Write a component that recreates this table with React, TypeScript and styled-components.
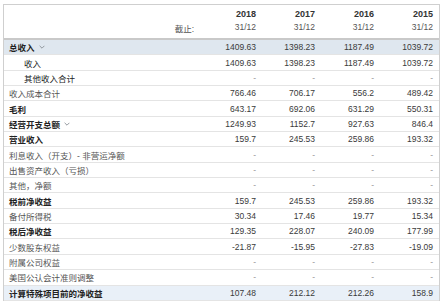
import styled, { createGlobalStyle } from "styled-components";

const GlobalStyle = createGlobalStyle`
  body {
    margin: 0;
    background: #fff;
    font-family: "Liberation Sans", Arial, "Noto Sans CJK SC", sans-serif;
  }
`;

type Kind = "total" | "bold" | "sub" | "plain" | "final";

type Line = {
  label: string;
  kind: Kind;
  values: string[];
  toggle?: boolean;
};

const years = [
  { year: "2018", date: "31/12" },
  { year: "2017", date: "31/12" },
  { year: "2016", date: "31/12" },
  { year: "2015", date: "31/12" },
];

const lines: Line[] = [
  { label: "总收入", kind: "total", toggle: true, values: ["1409.63", "1398.23", "1187.49", "1039.72"] },
  { label: "收入", kind: "sub", values: ["1409.63", "1398.23", "1187.49", "1039.72"] },
  { label: "其他收入合计", kind: "sub", values: ["-", "-", "-", "-"] },
  { label: "收入成本合计", kind: "plain", values: ["766.46", "706.17", "556.2", "489.42"] },
  { label: "毛利", kind: "bold", values: ["643.17", "692.06", "631.29", "550.31"] },
  { label: "经营开支总额", kind: "bold", toggle: true, values: ["1249.93", "1152.7", "927.63", "846.4"] },
  { label: "营业收入", kind: "bold", values: ["159.7", "245.53", "259.86", "193.32"] },
  { label: "利息收入（开支）- 非营运净额", kind: "plain", values: ["-", "-", "-", "-"] },
  { label: "出售资产收入（亏损）", kind: "plain", values: ["-", "-", "-", "-"] },
  { label: "其他，净额", kind: "plain", values: ["-", "-", "-", "-"] },
  { label: "税前净收益", kind: "bold", values: ["159.7", "245.53", "259.86", "193.32"] },
  { label: "备付所得税", kind: "plain", values: ["30.34", "17.46", "19.77", "15.34"] },
  { label: "税后净收益", kind: "bold", values: ["129.35", "228.07", "240.09", "177.99"] },
  { label: "少数股东权益", kind: "plain", values: ["-21.87", "-15.95", "-27.83", "-19.09"] },
  { label: "附属公司权益", kind: "plain", values: ["-", "-", "-", "-"] },
  { label: "美国公认会计准则调整", kind: "plain", values: ["-", "-", "-", "-"] },
  { label: "计算特殊项目前的净收益", kind: "final", values: ["107.48", "212.12", "212.26", "158.9"] },
];

const Chevron = () => (
  <svg width="6" height="4" viewBox="0 0 6 4">
    <path d="M0.6 0.8 L3 3.2 L5.4 0.8" fill="none" stroke="#8a8f96" strokeWidth="0.9" />
  </svg>
);

const App = () => (
  <>
    <GlobalStyle />
    <Page>
      <Table>
        <Header>
          <HeadLabel>截止:</HeadLabel>
          {years.map((y) => (
            <HeadCell key={y.year}>
              <Year>{y.year}</Year>
              <DateText>{y.date}</DateText>
            </HeadCell>
          ))}
        </Header>
        {lines.map((line) => (
          <Row key={line.label} $kind={line.kind}>
            <Label $kind={line.kind}>
              {line.label}
              {line.toggle && <Chevron />}
            </Label>
            {line.values.map((v, i) => (
              <Value key={i} $empty={v === "-"}>
                {v}
              </Value>
            ))}
          </Row>
        ))}
      </Table>
    </Page>
  </>
);

export default App;

const Page = styled.div`
  padding: 4px 7px 0 3px;
`;

const Table = styled.div`
  border: 1px solid #cfcfcf;
  border-bottom: none;
  font-size: 8.5px;
  color: #3a3a3a;
`;

const Header = styled.div`
  display: grid;
  grid-template-columns: 1fr repeat(4, 59px);
  height: 33px;
  border-bottom: 2px solid #c9c9c9;
`;

const HeadLabel = styled.div`
  display: flex;
  align-items: flex-end;
  justify-content: flex-end;
  padding: 0 9px 4px 0;
  color: #555;
`;

const HeadCell = styled.div`
  display: flex;
  flex-direction: column;
  align-items: flex-end;
  justify-content: flex-end;
  padding: 0 6px 4px 0;
  line-height: 13px;
`;

const Year = styled.span`
  font-weight: 700;
  font-size: 9px;
  color: #333;
`;

const DateText = styled.span`
  color: #555;
`;

const rowBg: Record<Kind, string> = {
  total: "#dfe7ef",
  final: "#e9f0f8",
  bold: "transparent",
  sub: "transparent",
  plain: "transparent",
};

const Row = styled.div<{ $kind: Kind }>`
  display: grid;
  grid-template-columns: 1fr repeat(4, 59px);
  align-items: center;
  box-sizing: border-box;
  height: 15.35px;
  border-bottom: 1px solid #e4e4e4;
  background: ${(p) => rowBg[p.$kind]};
`;

const Label = styled.div<{ $kind: Kind }>`
  display: flex;
  align-items: center;
  gap: 4px;
  padding-left: ${(p) => (p.$kind === "sub" ? "20px" : "5px")};
  font-weight: ${(p) => (p.$kind === "bold" || p.$kind === "total" || p.$kind === "final" ? 700 : 400)};
  color: ${(p) => (p.$kind === "plain" ? "#555" : "#222")};
  white-space: nowrap;
`;

const Value = styled.div<{ $empty: boolean }>`
  text-align: right;
  padding-right: 6px;
  color: ${(p) => (p.$empty ? "#999" : "#3a3a3a")};
`;
